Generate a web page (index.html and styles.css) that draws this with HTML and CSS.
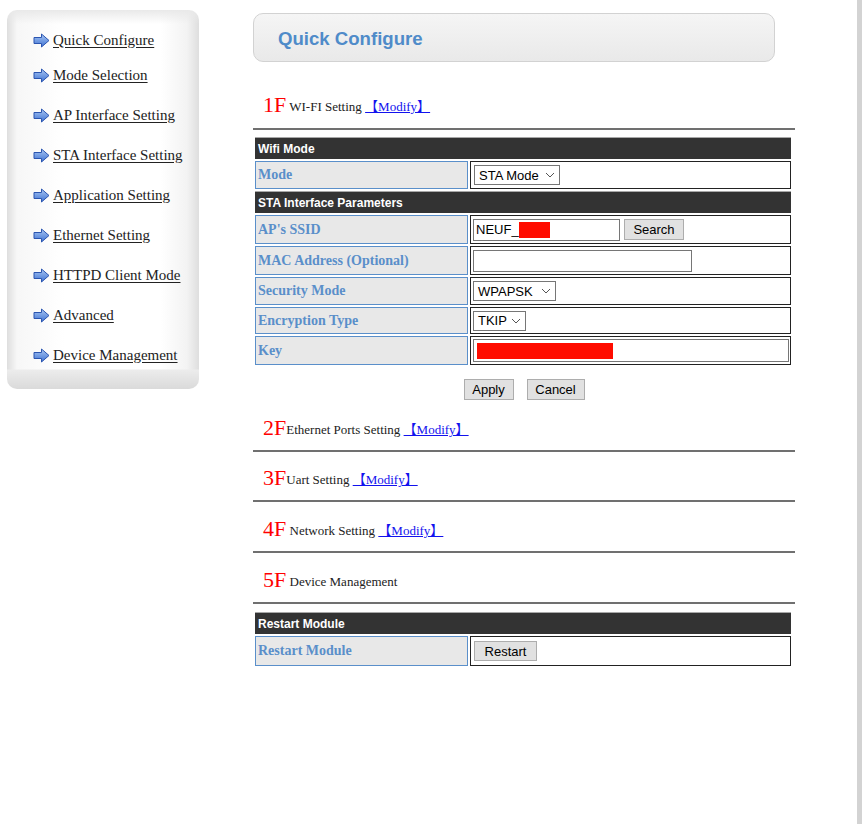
FILE: index.html
```html
<!DOCTYPE html>
<html>
<head>
<meta charset="utf-8">
<title>Quick Configure</title>
<link rel="stylesheet" href="styles.css">
</head>
<body>
<div class="page">
  <nav class="sidebar">
    <a class="nav-item first" href="#"><svg class="arrow" width="17" height="15" viewBox="0 0 17 15"><defs><linearGradient id="ag" x1="0" y1="0" x2="0" y2="1"><stop offset="0" stop-color="#a9c8f4"/><stop offset="1" stop-color="#3f72d2"/></linearGradient></defs><path d="M1 4.5 H8.5 V1 L16 7.5 L8.5 14 V10.5 H1 Z" fill="url(#ag)" stroke="#2b55b0" stroke-width="1"/></svg><span>Quick Configure</span></a>
    <a class="nav-item" href="#"><svg class="arrow" width="17" height="15" viewBox="0 0 17 15"><path d="M1 4.5 H8.5 V1 L16 7.5 L8.5 14 V10.5 H1 Z" fill="url(#ag)" stroke="#2b55b0" stroke-width="1"/></svg><span>Mode Selection</span></a>
    <a class="nav-item" href="#"><svg class="arrow" width="17" height="15" viewBox="0 0 17 15"><path d="M1 4.5 H8.5 V1 L16 7.5 L8.5 14 V10.5 H1 Z" fill="url(#ag)" stroke="#2b55b0" stroke-width="1"/></svg><span>AP Interface Setting</span></a>
    <a class="nav-item" href="#"><svg class="arrow" width="17" height="15" viewBox="0 0 17 15"><path d="M1 4.5 H8.5 V1 L16 7.5 L8.5 14 V10.5 H1 Z" fill="url(#ag)" stroke="#2b55b0" stroke-width="1"/></svg><span>STA Interface Setting</span></a>
    <a class="nav-item" href="#"><svg class="arrow" width="17" height="15" viewBox="0 0 17 15"><path d="M1 4.5 H8.5 V1 L16 7.5 L8.5 14 V10.5 H1 Z" fill="url(#ag)" stroke="#2b55b0" stroke-width="1"/></svg><span>Application Setting</span></a>
    <a class="nav-item" href="#"><svg class="arrow" width="17" height="15" viewBox="0 0 17 15"><path d="M1 4.5 H8.5 V1 L16 7.5 L8.5 14 V10.5 H1 Z" fill="url(#ag)" stroke="#2b55b0" stroke-width="1"/></svg><span>Ethernet Setting</span></a>
    <a class="nav-item" href="#"><svg class="arrow" width="17" height="15" viewBox="0 0 17 15"><path d="M1 4.5 H8.5 V1 L16 7.5 L8.5 14 V10.5 H1 Z" fill="url(#ag)" stroke="#2b55b0" stroke-width="1"/></svg><span>HTTPD Client Mode</span></a>
    <a class="nav-item" href="#"><svg class="arrow" width="17" height="15" viewBox="0 0 17 15"><path d="M1 4.5 H8.5 V1 L16 7.5 L8.5 14 V10.5 H1 Z" fill="url(#ag)" stroke="#2b55b0" stroke-width="1"/></svg><span>Advanced</span></a>
    <a class="nav-item" href="#"><svg class="arrow" width="17" height="15" viewBox="0 0 17 15"><path d="M1 4.5 H8.5 V1 L16 7.5 L8.5 14 V10.5 H1 Z" fill="url(#ag)" stroke="#2b55b0" stroke-width="1"/></svg><span>Device Management</span></a>
  </nav>

  <main class="main">
    <div class="heading"><h1>Quick Configure</h1></div>

    <div class="sec-title sec-first"><span class="fnum">1F</span> WI-FI Setting <a href="#" class="modify">【Modify】</a></div>
    <div class="rule"></div>

    <table class="cfg">
      <colgroup><col class="c1"><col class="c2"></colgroup>
      <tr><td colspan="2" class="th">Wifi Mode</td></tr>
      <tr class="r28"><td class="lbl">Mode</td><td class="val"><div class="select w86"><span>STA Mode</span><svg class="chev" width="10" height="6" viewBox="0 0 10 6"><path d="M1 1 L5 5 L9 1" fill="none" stroke="#555" stroke-width="1"/></svg></div></td></tr>
      <tr><td colspan="2" class="th">STA Interface Parameters</td></tr>
      <tr class="r29"><td class="lbl">AP's SSID</td><td class="val"><div class="inrow"><div class="input w147"><span>NEUF_</span><span class="redact r-ssid"></span></div><button class="btn search">Search</button></div></td></tr>
      <tr class="r29"><td class="lbl">MAC Address (Optional)</td><td class="val"><div class="input w219"></div></td></tr>
      <tr class="r28"><td class="lbl">Security Mode</td><td class="val"><div class="select w83 shift"><span>WPAPSK</span><svg class="chev" width="10" height="6" viewBox="0 0 10 6"><path d="M1 1 L5 5 L9 1" fill="none" stroke="#555" stroke-width="1"/></svg></div></td></tr>
      <tr class="r27"><td class="lbl">Encryption Type</td><td class="val"><div class="select w53 shift"><span>TKIP</span><svg class="chev" width="10" height="6" viewBox="0 0 10 6"><path d="M1 1 L5 5 L9 1" fill="none" stroke="#555" stroke-width="1"/></svg></div></td></tr>
      <tr class="r29"><td class="lbl">Key</td><td class="val"><div class="input wfull"><span class="redact r-key"></span></div></td></tr>
    </table>

    <div class="actions"><button class="btn apply">Apply</button><button class="btn cancel">Cancel</button></div>

    <div class="sec-title"><span class="fnum">2F</span>Ethernet Ports Setting <a href="#" class="modify">【Modify】</a></div>
    <div class="rule"></div>
    <div class="sec-title"><span class="fnum">3F</span>Uart Setting <a href="#" class="modify">【Modify】</a></div>
    <div class="rule"></div>
    <div class="sec-title tall"><span class="fnum">4F</span> Network Setting <a href="#" class="modify">【Modify】</a></div>
    <div class="rule"></div>
    <div class="sec-title tall"><span class="fnum">5F</span> Device Management</div>
    <div class="rule"></div>

    <table class="cfg cfg-restart">
      <colgroup><col class="c1"><col class="c2"></colgroup>
      <tr><td colspan="2" class="th">Restart Module</td></tr>
      <tr class="r30"><td class="lbl">Restart Module</td><td class="val"><button class="btn restart">Restart</button></td></tr>
    </table>
  </main>
</div>
</body>
</html>
```
FILE: styles.css
```css
html, body {
  margin: 0;
  padding: 0;
}
body {
  background: #d3d3d3;
  font-family: "Liberation Serif", "Times New Roman", serif;
  width: 862px;
  min-height: 824px;
}
.page {
  display: flex;
  align-items: flex-start;
  width: 857px;
  min-height: 824px;
  background: #fff;
}

/* Sidebar */
.sidebar {
  margin: 10px 0 0 7px;
  width: 192px;
  height: 379px;
  box-sizing: border-box;
  padding: 20px 0 0 26px;
  border-radius: 10px;
  display: flex;
  flex-direction: column;
  background:
    linear-gradient(to bottom, rgba(255,255,255,0) 0, rgba(255,255,255,0) 359px, #ececec 360px, #dadada 100%),
    linear-gradient(to bottom, #e9e9e9 0, rgba(255,255,255,0) 14px),
    linear-gradient(to right, #dedede 0, #f7f7f7 10px, #fff 30%, #fff 80%, #f3f3f3 180px, #dedede 100%);
}
.nav-item {
  display: flex;
  align-items: center;
  height: 40px;
  color: #222;
  font-size: 15px;
  text-decoration: none;
}
.nav-item.first {
  height: 20px;
  margin-bottom: 5px;
}
.nav-item span {
  text-decoration: underline;
  text-underline-offset: 2px;
}
.arrow {
  flex: none;
  margin-right: 3px;
}

/* Main */
.main {
  margin-left: 54px;
  width: 542px;
  display: flex;
  flex-direction: column;
}
.heading {
  margin-top: 13px;
  width: 522px;
  height: 49px;
  box-sizing: border-box;
  border: 1px solid #d2d2d2;
  border-radius: 10px;
  background: linear-gradient(to bottom, #f5f5f5, #e9e9e9);
  display: flex;
  align-items: center;
  padding-left: 24px;
}
.heading h1 {
  margin: 3px 0 0;
  font-family: "Liberation Sans", Arial, sans-serif;
  font-size: 18.6px;
  font-weight: bold;
  color: #4f8bc9;
}

.sec-title {
  padding: 14px 0 10px 10px;
  line-height: 24px;
  height: 24px;
  font-size: 13px;
  color: #222;
  white-space: nowrap;
}
.sec-title.tall {
  padding-top: 15px;
}
.sec-title.sec-first {
  padding-top: 31px;
  padding-bottom: 11px;
}
.fnum {
  color: #f00;
  font-size: 22px;
  vertical-align: -1px;
}
.modify {
  color: #1212ee;
  text-decoration: underline;
  font-family: "Liberation Serif", "Noto Sans CJK SC", serif;
  font-size: 13px;
}
.rule {
  height: 2px;
  background: #707070;
}

/* Tables */
.cfg {
  margin-top: 5px;
  width: 540px;
  table-layout: fixed;
  border-collapse: separate;
  border-spacing: 2px;
  font-size: 13px;
}
.cfg col.c1 { width: 213px; }
.cfg-restart {
  margin-top: 6px;
}
.cfg td {
  padding: 0;
}
.cfg .th {
  background: #333;
  color: #fff;
  font-family: "Liberation Sans", Arial, sans-serif;
  font-weight: bold;
  font-size: 12px;
  height: 21px;
  padding: 0 3px;
  border-top: 1px solid #a8a8a8;
}
.cfg .lbl {
  background: #e8e8e8;
  border: 1px solid #5a8fca;
  color: #5a8fca;
  font-weight: bold;
  font-size: 14px;
  padding-left: 2px;
}
.cfg .val {
  border: 1px solid #222;
  padding: 0 3px;
  font-family: "Liberation Sans", Arial, sans-serif;
}
.r30 td { height: 28px; }
.r29 td { height: 27px; }
.r28 td { height: 26px; }
.r27 td { height: 25px; }

.select {
  box-sizing: border-box;
  height: 20px;
  border: 1px solid #767676;
  background: #fff;
  display: flex;
  align-items: center;
  justify-content: space-between;
  padding: 0 4px 0 4px;
  font-size: 13px;
  color: #000;
}
.select.shift { margin-left: -1px; }
.select.w86 { width: 86px; }
.select.w83 { width: 83px; }
.select.w53 { width: 53px; }
.chev { flex: none; }

.inrow {
  display: flex;
  align-items: center;
  gap: 4px;
}
.input {
  box-sizing: border-box;
  height: 22px;
  border: 1px solid #767676;
  background: #fff;
  display: flex;
  align-items: center;
  padding: 0 2px;
  font-size: 13px;
  margin-left: -1px;
}
.input.w147 { width: 147px; }
.input.w219 { width: 219px; }
.input.wfull { width: 316px; height: 23px; padding: 0 3px; }
.redact {
  display: inline-block;
  background: #ff0c00;
}
.r-ssid { width: 31px; height: 16px; }
.r-key { width: 136px; height: 16px; }

.btn {
  box-sizing: border-box;
  height: 21px;
  border: 1px solid #adadad;
  background: #e1e1e1;
  font-family: "Liberation Sans", Arial, sans-serif;
  font-size: 13px;
  color: #000;
  padding: 0;
  border-radius: 0;
}
.btn.search { width: 60px; }
.btn.apply { width: 50px; }
.btn.cancel { width: 58px; }
.btn.restart { width: 63px; height: 20px; }

.actions {
  padding: 12px 0 2px;
  display: flex;
  justify-content: center;
  gap: 13px;
}
```
